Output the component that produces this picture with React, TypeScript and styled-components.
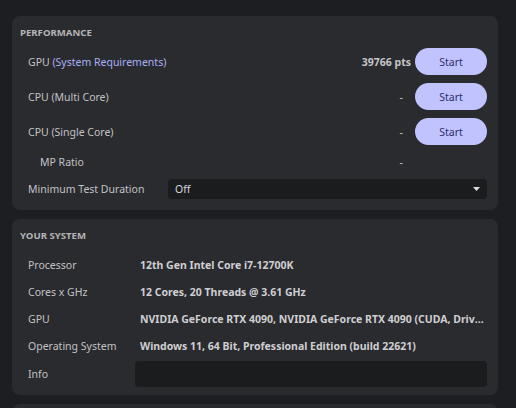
import React, {FC, ReactNode} from 'react';
import styled, {createGlobalStyle} from "styled-components";

const GlobalStyle = createGlobalStyle`
  html, body {
    margin: 0;
    padding: 0;
    background: #1d1e21;
    font-family: "Noto Sans", "Open Sans", sans-serif;
    font-size: 10.5px;
    color: #c4c4c6;
  }
`

const Page = styled.div`
  display: flex;
  flex-direction: column;
  gap: 9px;
  padding: 16px 18px 0 12px;
  height: 408px;
  box-sizing: border-box;
  overflow: hidden;
`

const Panel = styled.section<{ $pb?: number }>`
  background: #2a2b2f;
  border-radius: 8px;
  padding: 11px 11px ${p => p.$pb ?? 11}px 8px;
  display: flex;
  flex-direction: column;
`

const Heading = styled.h2`
  margin: 0 0 9px;
  height: 12px;
  line-height: 12px;
  font-size: 9.6px;
  font-weight: 700;
  color: #b4b4b6;
  text-transform: uppercase;
`

const Rows = styled.div<{ $gap: number }>`
  display: flex;
  flex-direction: column;
  gap: ${p => p.$gap}px;
`

const Row = styled.div<{ $h: number; $mt?: number }>`
  display: flex;
  align-items: center;
  height: ${p => p.$h}px;
  margin-top: ${p => p.$mt ?? 0}px;
`

const Label = styled.div<{ $indent?: number; $w?: number }>`
  flex: 0 0 ${p => p.$w ?? 148}px;
  padding-left: ${p => 8 + (p.$indent ?? 0)}px;
  box-sizing: border-box;
  color: #c2c2c4;
  white-space: nowrap;
`

const Accent = styled.span`
  color: #a9b0f5;
`

const Score = styled.div`
  flex: 1;
  text-align: right;
  padding-right: 4px;
  font-weight: 700;
  color: #c6c6c8;
`

const Dash = styled.div`
  flex: 1;
  text-align: right;
  padding-right: 12px;
  color: #c6c6c8;
`

const StartButton = styled.button`
  border: none;
  font: inherit;
  font-size: 10.5px;
  width: 72px;
  height: 27px;
  border-radius: 14px;
  background: #c1c3ff;
  color: #2b2f6b;
  cursor: pointer;
  flex: 0 0 auto;
`

const Spacer = styled.div`
  flex: 0 0 72px;
`

const Select = styled.div`
  flex: 1;
  height: 20px;
  background: #1b1c1e;
  border-radius: 4px;
  display: flex;
  align-items: center;
  justify-content: space-between;
  padding: 0 7px 0 7px;
  color: #d6d6d8;
`

const Value = styled.div`
  flex: 1;
  min-width: 0;
  font-weight: 700;
  color: #cfcfd1;
  white-space: nowrap;
  overflow: hidden;
  text-overflow: ellipsis;
`

const InfoBox = styled.div`
  flex: 1;
  height: 26px;
  margin-left: -5px;
  background: #1b1c1e;
  border-radius: 4px;
`

type BenchProps = {
    label: ReactNode,
    score?: string,
    button?: boolean,
    indent?: number,
    h?: number
}

const BenchRow: FC<BenchProps> = (props) => (
    <Row $h={props.h ?? 27}>
        <Label $indent={props.indent}>{props.label}</Label>
        {props.score ? <Score>{props.score}</Score> : <Dash>-</Dash>}
        {props.button ? <StartButton>Start</StartButton> : <Spacer/>}
    </Row>
)

const systemInfo = [
    ["Processor", "12th Gen Intel Core i7-12700K"],
    ["Cores x GHz", "12 Cores, 20 Threads @ 3.61 GHz"],
    ["GPU", "NVIDIA GeForce RTX 4090, NVIDIA GeForce RTX 4090 (CUDA, Driver 546.33)"],
    ["Operating System", "Windows 11, 64 Bit, Professional Edition (build 22621)"],
]

const App: FC = () => {
    return (
        <>
            <GlobalStyle/>
            <Page>
                <Panel>
                    <Heading>Performance</Heading>
                    <Rows $gap={8}>
                        <BenchRow label={<>GPU <Accent>(System Requirements)</Accent></>} score="39766 pts" button/>
                        <BenchRow label="CPU (Multi Core)" button/>
                        <BenchRow label="CPU (Single Core)" button/>
                        <BenchRow label="MP Ratio" indent={12} h={18}/>
                        <Row $h={20}>
                            <Label>Minimum Test Duration</Label>
                            <Select>
                                <span>Off</span>
                                <svg width="7" height="4" viewBox="0 0 7 4">
                                    <path d="M0 0 H7 L3.5 4 Z" fill="#e0dce8"/>
                                </svg>
                            </Select>
                        </Row>
                    </Rows>
                </Panel>
                <Panel $pb={8}>
                    <Heading>Your System</Heading>
                    <Rows $gap={0}>
                        {systemInfo.map(([k, v]) => (
                            <Row key={k} $h={27}>
                                <Label $w={120}>{k}</Label>
                                <Value>{v}</Value>
                            </Row>
                        ))}
                        <Row $h={26} $mt={2}>
                            <Label $w={120}>Info</Label>
                            <InfoBox/>
                        </Row>
                    </Rows>
                </Panel>
                <Panel/>
            </Page>
        </>
    );
};

export default App;
